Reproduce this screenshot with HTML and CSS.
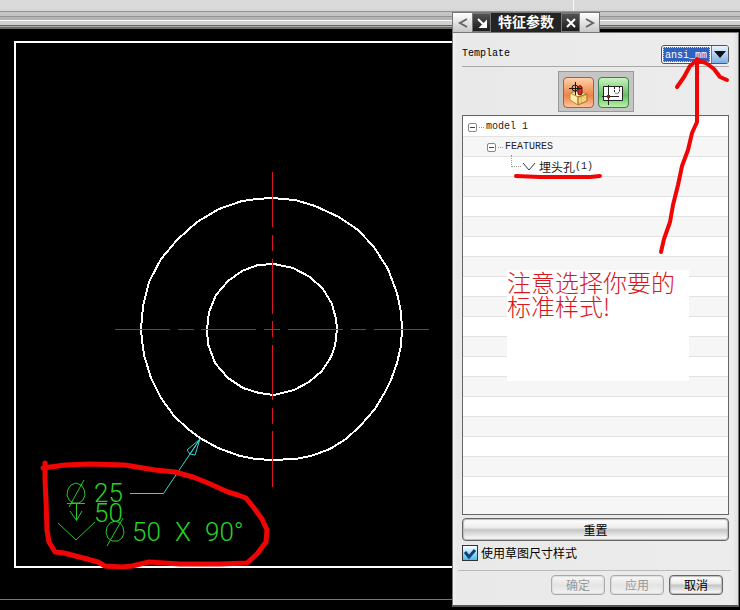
FILE: index.html
```html
<!DOCTYPE html>
<html lang="zh-CN">
<head>
<meta charset="utf-8">
<title>特征参数</title>
<link rel="stylesheet" href="styles.css">
</head>
<body>
<div class="desktop">
  <header class="toolbar"><div class="toolbar-main"></div><div class="toolbar-side"></div></header>

  <main class="workspace">
    <svg class="drawing" width="740" height="581" viewBox="0 29 740 581">
      <path class="sheet" d="M460 42H15V567H460"/>
      <path class="frame-line" d="M0 599.5H460"/>
      <polygon class="outline" points="402,329 401,346 397,363 391,380 385,392 375,409 360,426 346,439 330,449 311,456 295,459 272,460 256,459 240,456 218,448 200,438 188,429 174,416 161,398 151,378 144,355 142,340 141,329 143,306 149,282 161,259 177,240 197,222 219,209 242,201 257,199 272,198 295,200 315,206 339,217 358,230 374,247 388,269 397,293 401,312"/>
      <polygon class="outline" points="337,329 335,346 331,357 322,371 309,382 294,390 274,395 259,393 243,388 228,378 215,363 208,344 207,329 209,312 216,295 228,281 242,271 258,265 274,264 293,268 310,277 323,289 332,304 336,319"/>
      <path class="axis" d="M115 329.500H170M178 329.500H194M201 329.500H256M264 329.500H280M288 329.500H343M351 329.500H366M374 329.500H429M272.500 172V227M272.500 235V251M272.500 259V314M272.500 321V337M272.500 345V400M272.500 408V424M272.500 431V487"/>
      <path class="leader" d="M130 493.500H163.500L200 439M200 439L187 450L190 454L195 455ZM200 439L190 454"/>
      <g class="callout">
        <path d="M71 485L68 489L67 495L69 500L73 503H79L83 500L85 495L84 489L81 485L76 483ZM69 507L84 480M67 503.500H85M76.500 504V520M70 511L76.500 520.500L82 511M58 523L76 540L95 522M110 523L107 527L106 533L108 538L112 541H118L122 538L124 533L123 527L120 523L115 521ZM107 546L123 518"/>
        <text x="94" y="502">25</text>
        <text x="94" y="522">50</text>
        <text x="132" y="541">50</text>
        <text x="175" y="541">X</text>
        <text x="205" y="541">90°</text>
      </g>
    </svg>
  </main>

  <section class="dialog" aria-label="特征参数">
    <div class="title-bar">
      <button class="scroll" type="button" aria-label="‹"><svg width="12" height="12"><path d="M10 2L3 6L10 10"/></svg></button>
      <button class="tool" type="button" aria-label="↘"><svg width="12" height="12"><path d="M2 2L8 8M10 5V10H5Z"/></svg></button>
      <h1>特征参数</h1>
      <button class="tool" type="button" aria-label="×"><svg width="12" height="12"><path d="M2 2L10 10M10 2L2 10"/></svg></button>
      <button class="scroll" type="button" aria-label="›"><svg width="12" height="12"><path d="M2 2L9 6L2 10"/></svg></button>
    </div>
    <form class="panel">
      <div class="template-row">
        <label class="mono" for="template">Template</label>
        <div class="combo">
          <select class="mono" id="template"><option>ansi_mm</option></select>
          <span class="combo-arrow"><svg width="12" height="7"><path d="M0 0H12L6 7Z"/></svg></span>
        </div>
      </div>
      <div class="modes">
        <button class="mode mode-solid" type="button" aria-label="model">
          <svg width="26" height="26" viewBox="0 0 26 26">
            <path fill="#fff6bb" stroke="#b58b3c" d="M5 13L14 11L22 14L13 17Z"/>
            <path fill="#ffefaa" stroke="#b58b3c" d="M5 13L13 17V25L5 20Z"/>
            <path fill="#e0b658" stroke="#a87824" d="M13 17L22 14V21L13 25Z"/>
            <path stroke="#fff1af" d="M15 18V23M18 17V22M20 16V21"/>
            <path fill="#df2a16" stroke="#6b120c" d="M13 7Q15 4 17 7V14Q15 16 13 14Z"/>
            <circle cx="10" cy="8" r="3" fill="none" stroke="#181818"/>
            <path fill="none" stroke="#181818" d="M10.500 2V15M4 8.500H17"/>
          </svg>
        </button>
        <button class="mode mode-sketch" type="button" aria-label="sketch">
          <svg width="26" height="26" viewBox="0 0 26 26">
            <path fill="#fff" stroke="#222" d="M3.500 6.500H22.500V20.500H3.500Z"/>
            <path fill="none" stroke="#222" d="M8.500 5V25M2 16.500H19"/>
            <path fill="none" stroke="#222" stroke-dasharray="2 1" d="M14.500 7V12L16.500 14L19.500 12V7"/>
            <path fill="#a31212" d="M7 15H10V18H7Z"/>
          </svg>
        </button>
      </div>
      <div class="tree">
        <ul>
          <li><div class="node"><span class="toggle"></span><span class="dots"></span><span class="mono">model 1</span></div>
            <ul>
              <li><div class="node"><span class="toggle"></span><span class="dots"></span><span class="mono">FEATURES</span></div>
                <ul>
                  <li><div class="node leaf"><span class="elbow"></span><svg width="16" height="10"><path d="M2 1L8 8L14 1"/></svg><span>埋头孔</span><span class="mono">(1)</span></div></li>
                </ul>
              </li>
            </ul>
          </li>
        </ul>
      </div>
      <button class="button reset" type="button">重置</button>
      <label class="check"><input type="checkbox" checked>使用草图尺寸样式</label>
      <div class="actions">
        <button class="button" type="button" disabled>确定</button>
        <button class="button" type="button" disabled>应用</button>
        <button class="button primary" type="button">取消</button>
      </div>
    </form>
    <p class="note">注意选择你要的标准样式!</p>
  </section>

  <svg class="markup" width="740" height="610">
    <path d="M697 59V122L692 133L688 150L682 166L678 185L673 205L670 222L664 239L661 252"/>
    <path d="M677 87L684 77L690 66L697 60L706 63L714 69L720 77L727 80"/>
    <path d="M516 176L540 177L560 177L590 177L600 176"/>
    <path class="loop" d="M45 463V480L46 500L47 530L49 542L55 552L64 553L87 559L98 562L105 566L122 567L132 566L149 562L180 564L220 564L247 563L257 554L266 542L267 530L262 519L254 508L246 498L238 495L228 492L208 483L193 477L175 472L155 470L125 465L90 464L65 465L43 468"/>
  </svg>
</div>
</body>
</html>
```
FILE: styles.css
```css
* { box-sizing: border-box; }

body {
  margin: 0;
  background: #000;
  color: #000;
  font: 12px/16px "Noto Sans CJK SC", sans-serif;
}

.desktop {
  position: relative;
  display: flex;
  flex-direction: column;
  min-height: 100vh;
  overflow: hidden;
}

.toolbar {
  display: flex;
  height: 29px;
  background: linear-gradient(#dadada 0 8px, #d4d4d4 11px, #949494 11px 12px, #c4c4c4 12px 16px, #929292 16px 17px, #b4b4b4 17px 20px, #f8f8f8 20px 21px, #d0d0d0 21px 25px, #60605c 25px 26px, #b0b0aa 26px 27px, #686864 27px);
}
.toolbar-main { flex: 574; height: 11px; border-right: 1px solid #f8f8f8; }
.toolbar-side { flex: 166; }

.workspace { flex: 1; }
svg { display: block; fill: none; }
.sheet { stroke: #fff; stroke-width: 2; }
.frame-line { stroke: #777; }
.outline { stroke: #fff; stroke-width: 2; shape-rendering: crispEdges; }
.axis { stroke: #d81820; shape-rendering: crispEdges; }
.leader { stroke: #35d4d4; }
.callout path { stroke: #28c828; }
.callout text { fill: #28d028; font: 300 26px Roboto, sans-serif; }

.dialog {
  position: absolute;
  top: 12px;
  right: 1px;
  width: 287px;
}

.title-bar { display: flex; width: 148px; height: 20px; border: 1px solid #777; border-bottom: 0; background: #242424; }
.title-bar h1 {
  flex: 1;
  margin: 0;
  color: #fff;
  font-size: 14px;
  line-height: 17px;
  font-weight: 700;
  text-align: center;
}
.title-bar button { display: grid; place-items: center; width: 19px; padding: 0; border: 0; }
.title-bar path { stroke-width: 2; }
.scroll { background: linear-gradient(#fff, #c8c8c8); }
.scroll path { stroke: #666; }
.tool { background: linear-gradient(#555, #181818); outline: 1px solid #777; outline-offset: -1px; }
.tool path { stroke: #fff; fill: #fff; }

.panel {
  display: flex;
  flex-direction: column;
  padding: 12px 9px 10px;
  border: 1px solid #777;
  border-bottom: 2px solid #555;
  background: linear-gradient(90deg, #f2f2f2, #e9e9e9 4px, #ececec 280px, #ddd);
}
.mono { font: 10px/16px "Liberation Mono", monospace; }

.template-row {
  display: flex;
  align-items: center;
  justify-content: space-between;
  height: 22px;
  padding-bottom: 3px;
  border-bottom: 1px solid #aaa;
}
.combo {
  display: flex;
  width: 68px;
  height: 19px;
  border: 1px solid #555;
  border-radius: 3px;
  background: #fff;
  overflow: hidden;
}
.combo select {
  appearance: none;
  flex: 1;
  min-width: 0;
  margin: 1px;
  padding: 0 1px;
  border: 1px dotted #e8d090;
  border-radius: 0;
  background: #2f62be;
  color: #fff;
}
.combo-arrow { display: grid; place-items: center; width: 17px; border-left: 1px solid #5a7ba8; background: linear-gradient(#eaf4ff, #7eaee4); }
.combo-arrow path { fill: #111; }

.modes {
  display: flex;
  align-self: center;
  gap: 4px;
  margin: 4px 0 3px;
  padding: 5px 4px 3px;
  border: 1px solid #999;
  background: #c5c5c5;
}
.mode { display: grid; place-content: center; width: 31px; height: 31px; padding: 0; border: 1px solid; border-radius: 4px; }
.mode-solid { border-color: #9b6149; background: linear-gradient(#ffd0a8, #ef8346 60%, #ffc39a); }
.mode-sketch { border-color: #3e7d46; background: linear-gradient(#c9f5be, #67bd66 60%, #b8f3a8); }

.tree {
  height: 400px;
  padding-top: 1px;
  border: 1px solid #666;
  background: repeating-linear-gradient(#fff 0 19px, #e2e2e2 19px 20px, #f6f6f6 20px 39px, #e2e2e2 39px 40px) 0 1px;
}
.tree ul { margin: 0; padding: 0; list-style: none; }
.tree ul ul { padding-left: 19px; }
.node { display: flex; align-items: center; height: 20px; padding-left: 5px; color: #222; }
.toggle { width: 9px; height: 9px; border: 1px solid #888; border-radius: 2px; background: linear-gradient(#444, #444) center / 5px 1px no-repeat #fff; }
.dots { width: 5px; margin: 0 2px; border-top: 1px dotted #999; }
.leaf { padding-left: 10px; font-size: 12px; }
.elbow { width: 10px; height: 12px; margin-bottom: 12px; border: 1px dotted #999; border-width: 0 0 1px 1px; }
.leaf path { stroke: #33335f; }
.leaf svg { margin-right: 2px; }

.button {
  width: 54px;
  height: 20px;
  padding: 0;
  border: 1px solid #666;
  border-radius: 4px;
  background: linear-gradient(#fff, #ededed 40%, #c6c6c6 52%, #f5f5f5 90%);
  box-shadow: inset 0 0 1px 1px #bbb;
  color: #000;
  font: 12px/16px "Noto Sans CJK SC", sans-serif;
}
.button:disabled { border-color: #aaa; background: linear-gradient(#f8f8f8, #e4e4e4 52%, #f4f4f4); box-shadow: inset 0 0 1px 1px #ddd; color: #999; }
.reset { width: 100%; height: 23px; margin: 3px 0; }

.check { display: flex; align-items: center; gap: 3px; height: 18px; }
.check input {
  appearance: none;
  width: 16px;
  height: 16px;
  margin: 0;
  border: 1px solid #333;
  background: linear-gradient(#fff, #45bfe8);
}
.check input:checked {
  background: url("data:image/svg+xml,%3Csvg xmlns='http://www.w3.org/2000/svg' width='14' height='14'%3E%3Cpath d='M2 6L6 11L12 4' fill='none' stroke='%23143f82' stroke-width='3'/%3E%3C/svg%3E") center no-repeat, linear-gradient(#fff, #45bfe8);
}

.actions { display: flex; justify-content: flex-end; gap: 5px; margin: 8px -2px 0 -4px; padding: 4px 8px 0 0; border-top: 1px solid #bbb; }

.note {
  position: absolute;
  top: 258px;
  left: 55px;
  width: 182px;
  height: 111px;
  margin: 0;
  background: #fff;
  color: #d81820;
  font-size: 24px;
  font-weight: 300;
  line-height: 24px;
}

.markup { position: absolute; inset: 0; pointer-events: none; }
.markup path { stroke: #f00505; stroke-width: 4; stroke-linecap: round; stroke-linejoin: round; }
.markup .loop { stroke-width: 5; }
```
